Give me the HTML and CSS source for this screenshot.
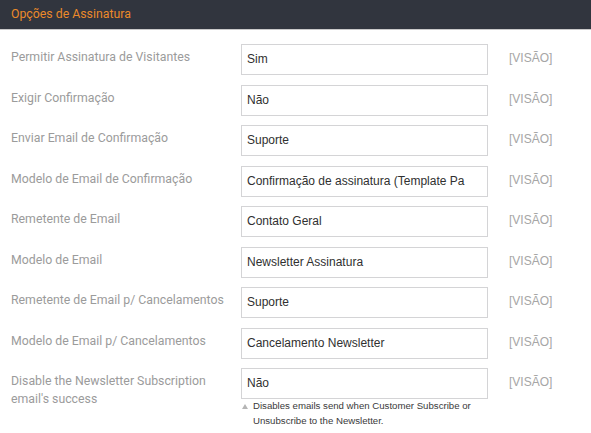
FILE: index.html
```html
<!DOCTYPE html>
<html lang="pt-BR">
<head>
<meta charset="utf-8">
<title>Opções de Assinatura</title>
<link rel="stylesheet" href="styles.css">
</head>
<body>
<div class="section-head">Opções de Assinatura</div>
<div class="form">
  <div class="row"><div class="label">Permitir Assinatura de Visitantes</div><div class="field"><div class="input">Sim</div></div><div class="scope">[VISÃO]</div></div>
  <div class="row"><div class="label">Exigir Confirmação</div><div class="field"><div class="input">Não</div></div><div class="scope">[VISÃO]</div></div>
  <div class="row"><div class="label">Enviar Email de Confirmação</div><div class="field"><div class="input">Suporte</div></div><div class="scope">[VISÃO]</div></div>
  <div class="row"><div class="label">Modelo de Email de Confirmação</div><div class="field"><div class="input">Confirmação de assinatura (Template Pa</div></div><div class="scope">[VISÃO]</div></div>
  <div class="row"><div class="label">Remetente de Email</div><div class="field"><div class="input">Contato Geral</div></div><div class="scope">[VISÃO]</div></div>
  <div class="row"><div class="label">Modelo de Email</div><div class="field"><div class="input">Newsletter Assinatura</div></div><div class="scope">[VISÃO]</div></div>
  <div class="row"><div class="label">Remetente de Email p/ Cancelamentos</div><div class="field"><div class="input">Suporte</div></div><div class="scope">[VISÃO]</div></div>
  <div class="row"><div class="label">Modelo de Email p/ Cancelamentos</div><div class="field"><div class="input">Cancelamento Newsletter</div></div><div class="scope">[VISÃO]</div></div>
  <div class="row"><div class="label">Disable the Newsletter Subscription email's success</div><div class="field"><div class="input">Não</div><div class="note"><span class="tri"></span><span class="note-text">Disables emails send when Customer Subscribe or Unsubscribe to the Newsletter.</span></div></div><div class="scope">[VISÃO]</div></div>
</div>
</body>
</html>
```
FILE: styles.css
```css
html, body {
  margin: 0;
  padding: 0;
  background: #ffffff;
}
body {
  width: 591px;
  height: 433px;
  overflow: hidden;
  font-family: Roboto, "Liberation Sans", Arial, sans-serif;
}
.section-head {
  height: 29px;
  line-height: 28px;
  background: #31353e;
  border-bottom: 1px solid #c9c9c9;
  color: #eb8a2a;
  font-size: 12.3px;
  padding-left: 11px;
  box-sizing: content-box;
}
.form {
  padding-top: 14px;
  display: flex;
  flex-direction: column;
  gap: 9.5px;
}
.row {
  display: flex;
  align-items: flex-start;
}
.label {
  box-sizing: border-box;
  width: 241px;
  padding-left: 11px;
  padding-top: 4px;
  font-size: 12.3px;
  line-height: 18px;
  color: #9b9b9b;
  flex: none;
}
.field {
  width: 247px;
  flex: none;
}
.input {
  box-sizing: border-box;
  height: 31px;
  border: 1px solid #d4d4d6;
  background: #fff;
  padding: 0 24px 0 5px;
  font-family: "Liberation Sans", Arial, sans-serif;
  font-size: 12px;
  line-height: 29px;
  color: #303030;
  white-space: nowrap;
  overflow: hidden;
}
.scope {
  margin-left: 21px;
  padding-top: 6px;
  font-family: "Liberation Sans", Arial, sans-serif;
  font-size: 12px;
  line-height: 16px;
  color: #a6a6a6;
}
.note {
  display: flex;
  align-items: flex-start;
  padding-left: 1px;
  font-family: "Liberation Sans", Arial, sans-serif;
  font-size: 9.65px;
  line-height: 14.5px;
  color: #3a3a3a;
}
.tri {
  flex: none;
  width: 0;
  height: 0;
  margin-top: 5px;
  margin-right: 5px;
  border-left: 3px solid transparent;
  border-right: 3px solid transparent;
  border-bottom: 5px solid #b5b5b5;
}
.note-text {
  width: 236px;
}
```
